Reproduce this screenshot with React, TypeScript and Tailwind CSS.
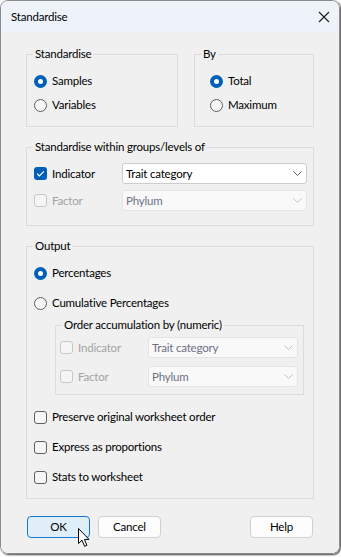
import React from "react";

interface GroupProps {
  title: string;
  className?: string;
  bodyClassName?: string;
  children: React.ReactNode;
}

// fieldset keeps no side padding so the legend sits 8px in from the border
const Group: React.FC<GroupProps> = ({
  title,
  className,
  bodyClassName,
  children,
}) => {
  return (
    <fieldset className={`border border-[#dcdcdc] ${className ?? ""}`}>
      <legend className="ml-[6px] px-[2px] leading-[16px]">{title}</legend>
      <div className={bodyClassName}>{children}</div>
    </fieldset>
  );
};

const Radio: React.FC<{ label: string; checked?: boolean }> = ({
  label,
  checked,
}) => {
  return (
    <div className="flex h-[16px] items-center gap-[5px]">
      {checked ? (
        <span className="flex h-[13px] w-[13px] items-center justify-center rounded-full bg-[#005fb8]">
          <span className="h-[5px] w-[5px] rounded-full bg-white" />
        </span>
      ) : (
        <span className="h-[13px] w-[13px] rounded-full border border-[#5f5f5f] bg-[#f6f6f6]" />
      )}
      <span>{label}</span>
    </div>
  );
};

const Checkbox: React.FC<{
  label: string;
  checked?: boolean;
  disabled?: boolean;
}> = ({ label, checked, disabled }) => {
  return (
    <div className="flex h-[16px] items-center gap-[5px]">
      {checked ? (
        <span className="flex h-[13px] w-[13px] items-center justify-center rounded-[3px] bg-[#005fb8]">
          <svg width="13" height="13" viewBox="0 0 13 13">
            <path
              d="M3.2 6.8 L5.4 8.9 L9.8 4.3"
              fill="none"
              stroke="white"
              strokeWidth="1.2"
            />
          </svg>
        </span>
      ) : (
        <span
          className={
            disabled
              ? "h-[13px] w-[13px] rounded-[3px] border border-[#c8c8c8] bg-[#f5f5f5]"
              : "h-[13px] w-[13px] rounded-[3px] border border-[#5f5f5f] bg-[#f6f6f6]"
          }
        />
      )}
      <span className={disabled ? "text-[#a3a3a3]" : ""}>{label}</span>
    </div>
  );
};

const Combo: React.FC<{
  value: string;
  disabled?: boolean;
  className?: string;
}> = ({ value, disabled, className }) => {
  return (
    <div
      className={`flex h-[21px] items-center justify-between rounded-[3px] border pl-[3px] pr-[4px] ${
        disabled
          ? "border-[#e4e4e4] bg-[#f9f9f9] text-[#6f6f86]"
          : "border-[#cccccc] bg-white text-black"
      } ${className ?? ""}`}
    >
      <span>{value}</span>
      <svg width="9" height="5" viewBox="0 0 9 5">
        <path
          d="M0.5 0.5 L4.5 4.5 L8.5 0.5"
          fill="none"
          stroke={disabled ? "#c2c2c2" : "#5c5c5c"}
          strokeWidth="1"
        />
      </svg>
    </div>
  );
};

const Button: React.FC<{
  label: string;
  primary?: boolean;
  children?: React.ReactNode;
}> = ({ label, primary, children }) => {
  return (
    <button
      className={`relative flex h-[22px] w-[63px] items-center justify-center rounded-[4px] border ${
        primary
          ? "border-[#1479d2] bg-[#e0eef9]"
          : "border-[#d0d0d0] bg-[#fdfdfd]"
      }`}
    >
      {label}
      {children}
    </button>
  );
};

export default function App() {
  return (
    <div className="h-[557px] w-[341px] bg-white font-['Lato',sans-serif] text-[11.5px] tracking-[-0.2px] text-black">
      <div className="flex h-[554px] w-[340px] flex-col overflow-hidden rounded-[8px] border border-[#8c8c8c] shadow-[1px_1px_2px_rgba(0,0,0,0.75)]">
        {/* title bar */}
        <div className="flex h-[31px] shrink-0 items-center justify-between bg-[#eef3fa] pl-[10px] pr-[9px]">
          <span>Standardise</span>
          <svg width="12" height="12" viewBox="0 0 12 12">
            <path
              d="M1 1 L11 11 M11 1 L1 11"
              stroke="#1a1a1a"
              strokeWidth="1.1"
            />
          </svg>
        </div>

        <div className="flex flex-1 flex-col bg-[#f0f0f0] px-[25px] pt-[14px]">
          {/* row 1 */}
          <div className="flex gap-[16px]">
            <Group
              title="Standardise"
              className="w-[152px]"
              bodyClassName="flex flex-col gap-[8px] pb-[13px] pl-[7px] pt-[11px]"
            >
              <Radio label="Samples" checked />
              <Radio label="Variables" />
            </Group>
            <Group
              title="By"
              className="w-[120px]"
              bodyClassName="flex flex-col gap-[8px] pb-[13px] pl-[15px] pt-[11px]"
            >
              <Radio label="Total" checked />
              <Radio label="Maximum" />
            </Group>
          </div>

          {/* row 2 */}
          <Group
            title="Standardise within groups/levels of"
            className="mt-[12px]"
            bodyClassName="flex flex-col gap-[6px] pb-[14px] pl-[7px] pr-[6px] pt-[8px]"
          >
            <div className="flex items-center">
              <div className="flex-1">
                <Checkbox label="Indicator" checked />
              </div>
              <Combo value="Trait category" className="w-[185px]" />
            </div>
            <div className="flex items-center">
              <div className="flex-1">
                <Checkbox label="Factor" disabled />
              </div>
              <Combo value="Phylum" disabled className="w-[185px]" />
            </div>
          </Group>

          {/* output */}
          <Group
            title="Output"
            className="mt-[12px]"
            bodyClassName="flex flex-col pb-[13px] pl-[7px] pt-[11px]"
          >
            <div className="flex flex-col gap-[14px]">
              <Radio label="Percentages" checked />
              <Radio label="Cumulative Percentages" />
            </div>
            <Group
              title="Order accumulation by (numeric)"
              className="ml-[21px] mt-[6px] w-[249px]"
              bodyClassName="flex flex-col gap-[8px] pb-[7px] pl-[4px] pr-[5px] pt-[4px]"
            >
              <div className="flex items-center">
                <div className="flex-1">
                  <Checkbox label="Indicator" disabled />
                </div>
                <Combo value="Trait category" disabled className="w-[150px]" />
              </div>
              <div className="flex items-center">
                <div className="flex-1">
                  <Checkbox label="Factor" disabled />
                </div>
                <Combo value="Phylum" disabled className="w-[150px]" />
              </div>
            </Group>
            <div className="mt-[14px] flex flex-col gap-[14px]">
              <Checkbox label="Preserve original worksheet order" />
              <Checkbox label="Express as proportions" />
              <Checkbox label="Stats to worksheet" />
            </div>
          </Group>

          {/* buttons */}
          <div className="mt-[17px] flex items-center pl-[1px] pr-[1px]">
            <Button label="OK" primary>
              <svg
                className="absolute left-[50px] top-[11px]"
                width="13"
                height="20"
                viewBox="0 0 13 20"
              >
                <path
                  d="M0.5 0.5 L0.5 15.5 L4 12.2 L6.6 18.3 L8.9 17.3 L6.4 11.4 L11 11.4 Z"
                  fill="white"
                  stroke="black"
                  strokeWidth="1"
                  strokeLinejoin="round"
                />
              </svg>
            </Button>
            <div className="ml-[8px]">
              <Button label="Cancel" />
            </div>
            <div className="ml-auto">
              <Button label="Help" />
            </div>
          </div>
        </div>
      </div>
    </div>
  );
}
